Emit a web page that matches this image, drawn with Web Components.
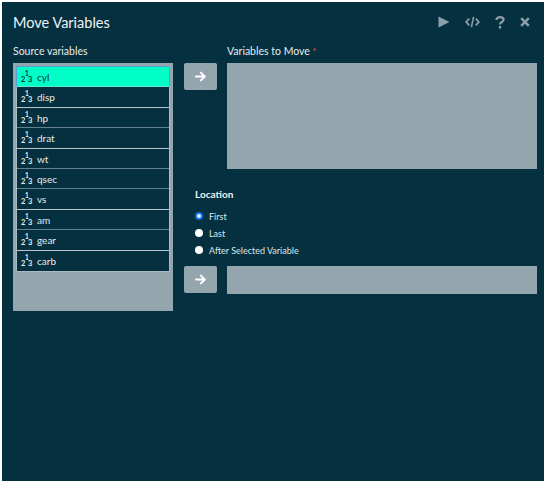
<!DOCTYPE html>
<html><head><meta charset="utf-8"><style>
html,body{margin:0;padding:0;background:#fff;height:100%}
body{padding:2px 2px 2px 2px;box-sizing:border-box;height:483px;overflow:hidden;font-family:"Lato","Noto Sans",sans-serif}
</style></head><body>
<move-app></move-app>
<script>
const F='font-family:Lato,"Noto Sans",sans-serif;';
class VarItem extends HTMLElement{constructor(){super();this.attachShadow({mode:'open'}).innerHTML=`<style>
:host{display:flex;align-items:center;box-sizing:border-box;height:20px;padding-left:4px;background:#04303f;color:#e6ecee;font-size:10px;box-shadow:0 0 0 .5px #c4d0d5;${F}}
:host([selected]){background:#00ffc6;color:#04303f;box-shadow:0 0 0 1px #5d9ed0}
.i{position:relative;display:inline-block;width:13px;height:12px;font-size:7.5px;font-weight:700;line-height:1;margin-right:3px}
.i span{position:absolute}
.a{left:0;top:5px}.b{left:4px;top:0;font-size:6.5px}.c{left:7px;top:5px}
</style><span class="i"><span class="a">2</span><span class="b">1</span><span class="c">3</span></span><slot></slot>`}}
customElements.define('var-item',VarItem);
class ArrowBtn extends HTMLElement{constructor(){super();this.attachShadow({mode:'open'}).innerHTML=`<style>
:host{display:flex;align-items:center;justify-content:center;width:33px;height:27px;background:#95a5ad;border-radius:2px;box-sizing:border-box}
</style><svg width="11" height="11" viewBox="0 0 11 11" fill="none" stroke="#fff" stroke-width="1.9" stroke-linecap="round" stroke-linejoin="round"><path d="M1 5.5H9.6M5.9 1.6 9.8 5.5 5.9 9.4"/></svg>`}}
customElements.define('arrow-btn',ArrowBtn);
class RadioRow extends HTMLElement{constructor(){super();this.attachShadow({mode:'open'}).innerHTML=`<style>
:host{display:flex;align-items:center;height:17px;color:#dfe6e9;font-size:9px;${F}}
.r{width:8px;height:8px;border-radius:50%;background:#fff;margin-right:6px;position:relative;top:-1px;box-sizing:border-box}
:host([checked]) .r{border:2.5px solid #0f75e8}
</style><span class="r"></span><slot></slot>`}}
customElements.define('radio-row',RadioRow);
class MoveApp extends HTMLElement{constructor(){super();this.attachShadow({mode:'open'}).innerHTML=`<style>
:host{display:block;box-sizing:border-box;height:479px;width:542px;background:#04303f;color:#eef2f3;${F}}
header{display:flex;align-items:center;height:38px;padding:2px 14px 0 11px;box-sizing:border-box}
h1{margin:0;font-size:14.5px;font-weight:400;flex:1;color:#f1f4f5}
.tools{display:flex;align-items:center;gap:15px}
.main{display:grid;grid-template-columns:160px 33px 310px;column-gap:11px;padding:3px 0 0 11px;column-gap:10.5px}
label{display:block;font-size:10.5px;height:20px;line-height:17px;color:#e6ecee}
.req{color:#e4572e;font-size:9px;vertical-align:top}
.list{height:248px;background:#95a5ad;box-sizing:border-box;padding:4px;display:flex;flex-direction:column;gap:.4px}
.col{display:flex;flex-direction:column}
.mid{padding-top:20px}
.box{background:#95a5ad;height:106px}
.loc{padding:18px 0 0 0}
.loc h2{margin:0 0 7px;font-size:10px;font-weight:700;color:#eef2f3;line-height:14px;margin-left:-32px}
.rows{margin-left:-32px}
.foot{display:grid;grid-template-columns:33px 310px;column-gap:10px;margin-left:-43px;margin-top:7px}
.foot .box{height:28px}
</style>
<header><h1>Move Variables</h1><div class="tools">
<svg width="12" height="12" viewBox="0 0 12 12"><path d="M.5 .5 11.5 6 .5 11.5Z" fill="#8c9fa8"/></svg>
<svg width="15" height="12" viewBox="0 0 15 12" fill="none" stroke="#8c9fa8" stroke-width="1.8"><path d="M4.2 2.6 1.2 6l3 3.4M10.8 2.6l3 3.4-3 3.4"/><path d="M8.6 .8 6.4 11.2" stroke-width="1.6"/></svg>
<svg width="10" height="13" viewBox="0 0 10 13" fill="none" stroke="#8c9fa8" stroke-width="2.2"><path d="M1.4 4C1.4 2 3 1.2 5 1.2S8.6 2.2 8.6 3.8C8.6 6 5 6 5 8.4"/><path d="M5 10v2.6"/></svg>
<svg width="10" height="10" viewBox="0 0 10 10" stroke="#8c9fa8" stroke-width="2.6"><path d="M1.2 1.2 8.8 8.8M8.8 1.2 1.2 8.8"/></svg>
</div></header>
<div class="main">
<div class="col"><label>Source variables</label><div class="list">
<var-item selected>cyl</var-item><var-item>disp</var-item><var-item>hp</var-item><var-item>drat</var-item><var-item>wt</var-item><var-item>qsec</var-item><var-item>vs</var-item><var-item>am</var-item><var-item>gear</var-item><var-item>carb</var-item>
</div></div>
<div class="mid"><arrow-btn></arrow-btn></div>
<div class="col"><label>Variables to Move <span class="req">*</span></label><div class="box"></div>
<div class="loc"><h2>Location</h2><div class="rows"><radio-row checked>First</radio-row><radio-row>Last</radio-row><radio-row>After Selected Variable</radio-row></div>
<div class="foot"><arrow-btn></arrow-btn><div class="box"></div></div></div></div>
</div>`}}
customElements.define('move-app',MoveApp);
</script></body></html>
